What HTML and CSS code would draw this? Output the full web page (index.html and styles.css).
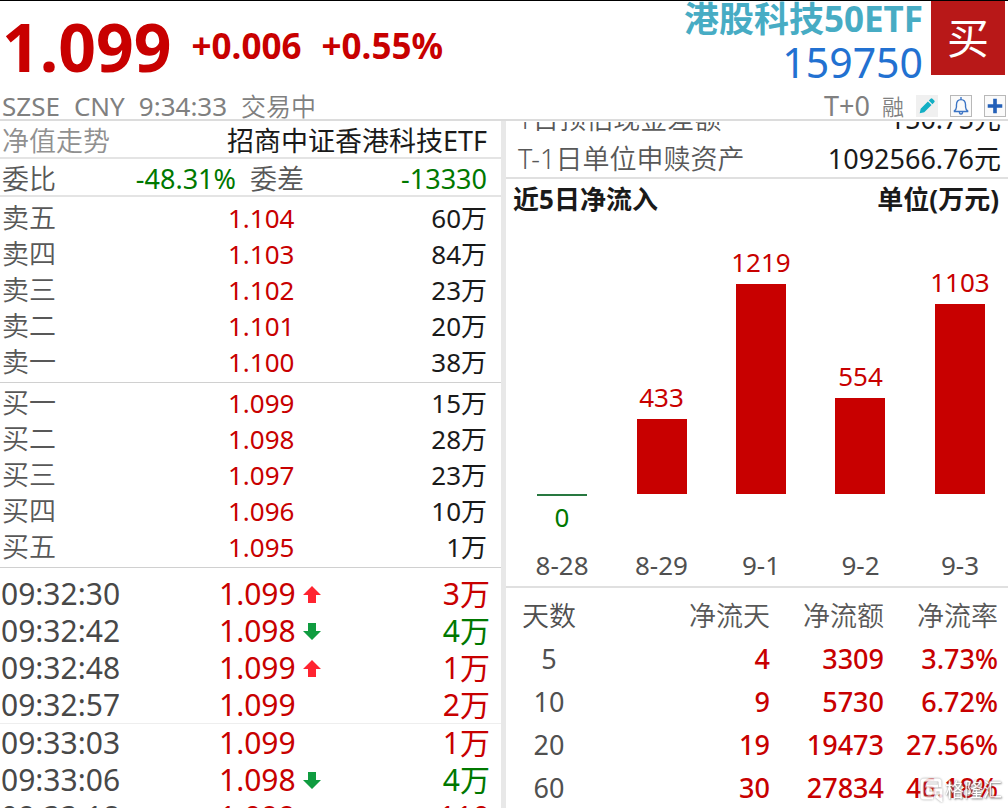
FILE: index.html
```html
<!DOCTYPE html>
<html lang="zh-CN">
<head>
    <meta charset="UTF-8">
    <meta name="viewport" content="width=device-width, initial-scale=1.0">
    <title>港股科技50ETF 159750</title>
    <link rel="stylesheet" href="styles.css">
</head>
<body>
    <header class="header">
        <div class="header-top">
            <div class="price-group">
                <span class="price">1.099</span>
                <span class="change">+0.006</span>
                <span class="change">+0.55%</span>
            </div>
            <div class="security">
                <h1 class="security-name">港股科技50ETF</h1>
                <div class="security-code">159750</div>
            </div>
            <button class="buy-button" type="button">买</button>
        </div>
        <div class="status">
            <span>SZSE</span>
            <span>CNY</span>
            <span>9:34:33</span>
            <span class="status-cn">交易中</span>
            <div class="tools">
                <span class="trade-tag">T+0</span>
                <span class="margin-tag">融</span>
                <button class="tool tool-edit" type="button" aria-label="编辑">
                    <svg viewBox="0 0 22 22"><path d="M3 19l1-5 8-8 4 4-8 8zM13 5l2-2q1-1 2 0l2 2q1 1 0 2l-2 2z" fill="#12afc4"/></svg>
                </button>
                <button class="tool" type="button" aria-label="提醒">
                    <svg viewBox="0 0 22 22"><path d="M11 1v3M3 17h16M3 17q3-2 3-5v-2c0-4 2-6 5-6s5 2 5 6v2q0 3 3 5M9 18q2 4 4 0" fill="none" stroke="#3b74c4" stroke-width="1.5"/></svg>
                </button>
                <button class="tool" type="button" aria-label="添加">
                    <svg viewBox="0 0 22 22"><path d="M11 3v16M3 11h16" stroke="#2460b8" stroke-width="4"/></svg>
                </button>
            </div>
        </div>
    </header>

    <main class="panels">
        <section class="left-panel">
            <div class="fund-row">
                <span class="nav-label">净值走势</span>
                <span>招商中证香港科技ETF</span>
            </div>
            <div class="ratio-row">
                <span class="label">委比</span>
                <span class="ratio-value green">-48.31%</span>
                <span class="label">委差</span>
                <span class="diff-value green">-13330</span>
            </div>

            <!-- 五档盘口 -->
            <table class="book asks">
                <tr><th>卖五</th><td class="red">1.104</td><td class="volume">60万</td></tr>
                <tr><th>卖四</th><td class="red">1.103</td><td class="volume">84万</td></tr>
                <tr><th>卖三</th><td class="red">1.102</td><td class="volume">23万</td></tr>
                <tr><th>卖二</th><td class="red">1.101</td><td class="volume">20万</td></tr>
                <tr><th>卖一</th><td class="red">1.100</td><td class="volume">38万</td></tr>
            </table>
            <table class="book">
                <tr><th>买一</th><td class="red">1.099</td><td class="volume">15万</td></tr>
                <tr><th>买二</th><td class="red">1.098</td><td class="volume">28万</td></tr>
                <tr><th>买三</th><td class="red">1.097</td><td class="volume">23万</td></tr>
                <tr><th>买四</th><td class="red">1.096</td><td class="volume">10万</td></tr>
                <tr><th>买五</th><td class="red">1.095</td><td class="volume">1万</td></tr>
            </table>

            <!-- 逐笔成交 -->
            <table class="ticks">
                <tbody>
                    <tr><td class="time">09:32:30</td><td class="red">1.099<svg class="arrow up" viewBox="0 0 18 18"><path d="M9 0l9 9h-5v8H5V9H0z"/></svg></td><td class="volume red">3万</td></tr>
                    <tr><td class="time">09:32:42</td><td class="red">1.098<svg class="arrow down" viewBox="0 0 18 18"><path d="M9 17l9-9h-5V0H5v8H0z"/></svg></td><td class="volume green">4万</td></tr>
                    <tr><td class="time">09:32:48</td><td class="red">1.099<svg class="arrow up" viewBox="0 0 18 18"><path d="M9 0l9 9h-5v8H5V9H0z"/></svg></td><td class="volume red">1万</td></tr>
                    <tr><td class="time">09:32:57</td><td class="red">1.099</td><td class="volume red">2万</td></tr>
                </tbody>
                <tbody class="minute">
                    <tr><td class="time">09:33:03</td><td class="red">1.099</td><td class="volume red">1万</td></tr>
                    <tr><td class="time">09:33:06</td><td class="red">1.098<svg class="arrow down" viewBox="0 0 18 18"><path d="M9 17l9-9h-5V0H5v8H0z"/></svg></td><td class="volume green">4万</td></tr>
                    <tr><td class="time">09:33:18</td><td class="red">1.099<svg class="arrow up" viewBox="0 0 18 18"><path d="M9 0l9 9h-5v8H5V9H0z"/></svg></td><td class="volume red">110</td></tr>
                </tbody>
            </table>
        </section>

        <section class="right-panel">
            <div class="info">
                <div class="info-row"><span class="label">T日预估现金差额</span><span>150.75元</span></div>
                <div class="info-row"><span class="label">T-1日单位申赎资产</span><span>1092566.76元</span></div>
            </div>

            <!-- 近5日净流入柱状图 -->
            <div class="flow">
                <h2 class="flow-title"><span>近5日净流入</span><span>单位(万元)</span></h2>
                <div class="chart">
                    <div class="day">
                        <div class="plot"></div>
                        <div class="below green"><div class="zero-line"></div>0</div>
                        <div class="date">8-28</div>
                    </div>
                    <div class="day">
                        <div class="plot red">433<div class="bar" style="height: 75px"></div></div>
                        <div class="below"></div>
                        <div class="date">8-29</div>
                    </div>
                    <div class="day">
                        <div class="plot red">1219<div class="bar" style="height: 210px"></div></div>
                        <div class="below"></div>
                        <div class="date">9-1</div>
                    </div>
                    <div class="day">
                        <div class="plot red">554<div class="bar" style="height: 96px"></div></div>
                        <div class="below"></div>
                        <div class="date">9-2</div>
                    </div>
                    <div class="day">
                        <div class="plot red">1103<div class="bar" style="height: 190px"></div></div>
                        <div class="below"></div>
                        <div class="date">9-3</div>
                    </div>
                </div>
            </div>

            <table class="summary">
                <thead>
                    <tr><th class="days">天数</th><th>净流天</th><th>净流额</th><th>净流率</th></tr>
                </thead>
                <tbody>
                    <tr><td class="days">5</td><td>4</td><td>3309</td><td>3.73%</td></tr>
                    <tr><td class="days">10</td><td>9</td><td>5730</td><td>6.72%</td></tr>
                    <tr><td class="days">20</td><td>19</td><td>19473</td><td>27.56%</td></tr>
                    <tr><td class="days">60</td><td>30</td><td>27834</td><td>46.18%</td></tr>
                </tbody>
            </table>
        </section>
    </main>

    <div class="watermark">
        <svg viewBox="0 0 24 24"><path d="M20 9V4q0-2-2-2H4Q2 2 2 4v14q0 2 2 2h9M18 8H8v7h7v-3h6v10l-5-4" fill="none" stroke="#fff" stroke-width="3"/></svg>
        <span>格隆汇</span>
    </div>
</body>
</html>
```
FILE: styles.css
```css
* {
    box-sizing: border-box;
}

body {
    display: flex;
    flex-direction: column;
    height: 100vh;
    margin: 0;
    overflow: hidden;
    position: relative;
    background-color: #fff;
    color: #1a1a1a;
    font-family: "Noto Sans", "Noto Sans CJK SC", sans-serif;
    font-size: 26px;
}

h1, h2 {
    margin: 0;
}

button {
    padding: 0;
    border: none;
    font-family: inherit;
    cursor: pointer;
}

table {
    width: 100%;
    border-collapse: collapse;
}

th, td {
    padding: 0;
    font-weight: normal;
    text-align: left;
}

.red {
    color: #c80000;
}

.green {
    color: #007800;
}

.label {
    color: #585858;
    font-size: 27px;
    font-weight: 350;
}

/* 顶部报价 */
.header {
    flex: none;
    border-top: 1px solid #000;
    border-bottom: 2px solid #dcdcdc;
}

.header-top {
    display: flex;
    height: 92px;
}

.price-group {
    display: flex;
    align-items: center;
    gap: 20px;
    flex: 1;
    padding: 0 0 2px 2px;
    color: #c80000;
    font-weight: bold;
    line-height: 88px;
}

.price {
    font-size: 66px;
}

.change {
    font-size: 35px;
}

.security {
    padding-right: 8px;
    text-align: right;
}

.security-name {
    color: #47acc4;
    font-size: 35px;
    line-height: 36px;
}

.security-code {
    color: #2271d1;
    font-size: 41px;
    line-height: 50px;
}

.buy-button {
    width: 74px;
    height: 74px;
    margin-right: 3px;
    padding-bottom: 6px;
    background-color: #b81818;
    color: #fff;
    font-size: 42px;
}

.status {
    display: flex;
    align-items: center;
    gap: 14px;
    padding: 0 2px;
    color: #808080;
    line-height: 26px;
}

.status-cn {
    font-size: 25px;
    font-weight: 350;
}

.tools {
    display: flex;
    align-items: center;
    gap: 12px;
    margin-left: auto;
}

.trade-tag {
    font-size: 27px;
}

.margin-tag {
    font-size: 22px;
    font-weight: 350;
}

.tool {
    width: 22px;
    height: 22px;
    border: 1px solid #b8b8b8;
    background-color: #fafafa;
}

.tool svg {
    display: block;
    width: 20px;
    height: 20px;
}

.tool-edit {
    border-color: #f0f0f0;
    background-color: #f0f0f0;
}

/* 左右两栏 */
.panels {
    display: flex;
    flex: 1;
    min-height: 0;
}

.left-panel {
    width: 50.2%;
    overflow: hidden;
    border-right: 5px solid #e8e8e8;
}

.fund-row, .ratio-row {
    display: flex;
    height: 38px;
    padding: 0 14px 0 2px;
    border-bottom: 2px solid #e4e4e4;
    font-size: 27px;
    line-height: 40px;
}

.fund-row {
    justify-content: space-between;
}

.nav-label {
    color: #909090;
    font-weight: 350;
}

.ratio-value {
    width: 180px;
    margin-right: 14px;
    text-align: right;
}

.diff-value {
    flex: 1;
    text-align: right;
}

.book {
    border-bottom: 1px solid #d0d0d0;
    border-collapse: separate;
    border-spacing: 0;
    padding: 2px 14px 2px 2px;
    line-height: 36px;
    table-layout: fixed;
}

.asks {
    padding-top: 3px;
}

.book th {
    width: 226px;
    color: #585858;
    font-size: 27px;
    font-weight: 350;
}

.book .volume, .ticks .volume {
    text-align: right;
}

.ticks {
    margin-top: 7px;
    font-size: 30px;
    line-height: 37px;
    table-layout: fixed;
}

.ticks td {
    height: 37px;
}

.ticks .time {
    width: 219px;
    padding-left: 1px;
    color: #484848;
}

.ticks .volume {
    padding-right: 11px;
}

.minute {
    border-top: 1px solid #eee;
}

.arrow {
    width: 18px;
    height: 18px;
    margin-left: 7px;
    vertical-align: 1px;
}

.up {
    fill: #ff2430;
}

.down {
    fill: #109c40;
}

/* 右栏 */
.right-panel {
    flex: 1;
    overflow: hidden;
}

.info {
    height: 57px;
    margin-top: 1px;
    overflow: hidden;
    display: flex;
    flex-direction: column;
    justify-content: flex-end;
    gap: 4px;
    border-bottom: 2px solid #e0e0e0;
    line-height: 36px;
}

.info-row {
    display: flex;
    flex: none;
    justify-content: space-between;
    padding: 0 7px 0 12px;
    font-size: 27px;
}

.flow {
    border-bottom: 2px solid #e0e0e0;
}

.flow-title {
    display: flex;
    justify-content: space-between;
    padding: 0 9px 0 7px;
    font-size: 26px;
    line-height: 40px;
}

.chart {
    display: flex;
    justify-content: space-between;
    padding: 0 18px 0 26px;
}

.day {
    width: 60px;
    text-align: center;
}

.plot {
    display: flex;
    flex-direction: column;
    align-items: center;
    justify-content: flex-end;
    height: 275px;
    line-height: 43px;
}

.bar {
    flex: none;
    width: 50px;
    background-color: #c80000;
}

.below {
    height: 50px;
    line-height: 43px;
}

.zero-line {
    height: 2px;
    margin: 0 5px;
    background-color: #287840;
}

.date {
    color: #505050;
    line-height: 42px;
}

.summary {
    margin-top: 6px;
    font-size: 27px;
    line-height: 43px;
    table-layout: fixed;
}

.summary th, .summary td {
    width: 114px;
    padding-right: 10px;
    text-align: right;
    white-space: nowrap;
}

.summary th {
    color: #585858;
    font-weight: 350;
}

.summary td {
    color: #c80000;
    font-weight: 500;
}

.summary .days {
    width: auto;
    padding-left: 16px;
    padding-right: 90px;
    color: #505050;
    text-align: center;
}

.summary td.days {
    font-weight: normal;
}

.watermark {
    position: absolute;
    right: 6px;
    bottom: 4px;
    display: flex;
    align-items: center;
    gap: 1px;
    color: #fff;
    font-size: 19px;
    line-height: 28px;
    opacity: 0.85;
    text-shadow: 0 0 2px #777, 1px 1px 2px #777;
}

.watermark svg {
    width: 24px;
    height: 24px;
    filter: drop-shadow(0 0 1px #888);
}
```
